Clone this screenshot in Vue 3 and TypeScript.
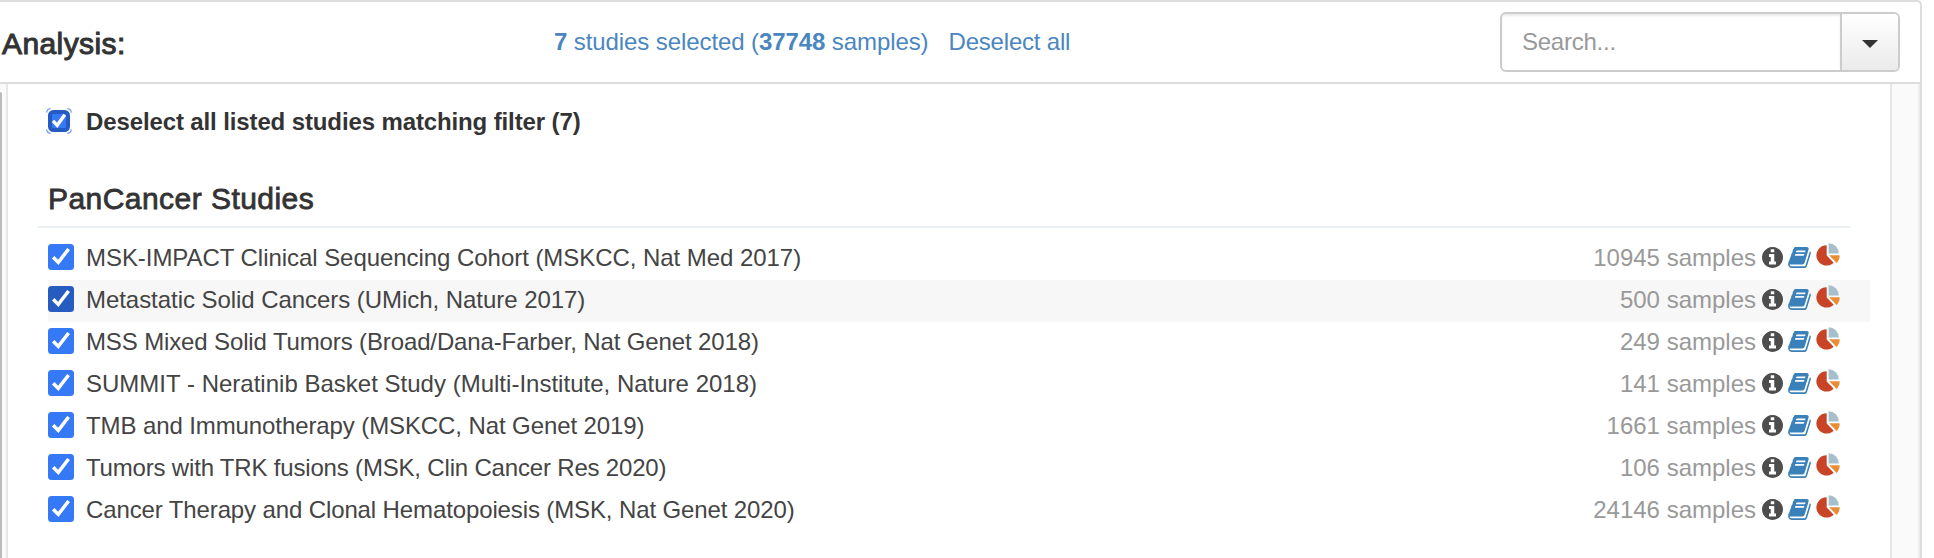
<script setup lang="ts">
interface Study {
  name: string
  samples: number
  spacing: string
  active?: boolean
}

const studies: Study[] = [
  { name: 'MSK-IMPACT Clinical Sequencing Cohort (MSKCC, Nat Med 2017)', samples: 10945, spacing: '-0.05px' },
  { name: 'Metastatic Solid Cancers (UMich, Nature 2017)', samples: 500, spacing: '-0.05px', active: true },
  { name: 'MSS Mixed Solid Tumors (Broad/Dana-Farber, Nat Genet 2018)', samples: 249, spacing: '-0.13px' },
  { name: 'SUMMIT - Neratinib Basket Study (Multi-Institute, Nature 2018)', samples: 141, spacing: '0.01px' },
  { name: 'TMB and Immunotherapy (MSKCC, Nat Genet 2019)', samples: 1661, spacing: '-0.1px' },
  { name: 'Tumors with TRK fusions (MSK, Clin Cancer Res 2020)', samples: 106, spacing: '-0.18px' },
  { name: 'Cancer Therapy and Clonal Hematopoiesis (MSK, Nat Genet 2020)', samples: 24146, spacing: '-0.12px' },
]
</script>

<template>
  <div class="page">
    <div class="frame">
      <header class="header">
        <h2 class="title">Analysis:</h2>
        <div class="summary">
          <a class="selected"><b>7</b> studies selected (<b>37748</b> samples)</a>
          <a class="deselect">Deselect all</a>
        </div>
        <div class="search">
          <input class="search-input" type="text" placeholder="Search..." />
          <button class="search-toggle" type="button" aria-label="Search options"><span class="caret"></span></button>
        </div>
      </header>
      <main class="body">
        <div class="scroll-edge"></div>
        <section class="panel">
          <label class="all">
            <svg class="all-box" viewBox="0 0 26 26">
              <path d="M.6 4.600Q1 1 4.600.6M21.400.6Q25 1 25.400 4.600M25.400 21.400Q25 25 21.400 25.400M4.600 25.400Q1 25 .6 21.400" fill="none" stroke="#6f9df0" stroke-width="1.200" />
              <rect x="2" y="2" width="22" height="22" rx="5.500" fill="#265bc6" />
              <rect x="6" y="6" width="14" height="14" rx="1" fill="#3679f6" />
              <path d="M7 12.800 11.200 17.300 18.800 6.800" fill="none" stroke="#fff" stroke-width="3.400" />
            </svg>
            <span class="all-text">Deselect all listed studies matching filter (7)</span>
          </label>
          <h3 class="group">PanCancer Studies</h3>
          <ul class="list">
            <li v-for="s in studies" :key="s.name" class="row" :class="{ active: s.active }">
              <svg class="box" viewBox="0 0 26 26">
                <rect class="box-fill" width="26" height="26" rx="3.5" />
                <path d="M5.200 13.200 10.300 18.400 20.600 5" fill="none" stroke="#fff" stroke-width="3.5" />
              </svg>
              <span class="name" :style="{ letterSpacing: s.spacing }">{{ s.name }}</span>
              <span class="count">{{ s.samples }} samples</span>
              <svg class="info" viewBox="0 0 1536 1536">
                <path fill="#4d4d4d" d="M1024 1248v-160q0-14-9-23t-23-9h-96V544q0-14-9-23t-23-9H544q-14 0-23 9t-9 23v160q0 14 9 23t23 9h96v320h-96q-14 0-23 9t-9 23v160q0 14 9 23t23 9h448q14 0 23-9t9-23zM896 352V192q0-14-9-23t-23-9H672q-14 0-23 9t-9 23v160q0 14 9 23t23 9h192q14 0 23-9t9-23zm640 416q0 209-103 385.500T1153.500 1433 768 1536t-385.500-103T103 1153.500 0 768t103-385.500T382.500 103 768 0t385.500 103T1433 382.500 1536 768z" />
              </svg>
              <svg class="book" viewBox="0 0 1664 1536">
                <path fill="#3a80b9" d="M1639 350q40 57 18 129l-275 906q-19 64-76.500 107.500T1183 1536H260q-77 0-148.500-53.500T12 1351q-24-67-2-127 0-4 3-27t4-37q1-8-3-21.500t-3-19.500q2-11 8-21t16.500-23.500T52 1051q23-38 45-91.500t30-91.500q3-10 .500-30t-.500-28q3-11 17-28t17-23q21-36 42-92t25-90q1-9-2.500-32t.5-28q4-13 22-30.500t22-22.500q19-26 42.500-84.500T340 283q1-8-3-25.500t-2-26.500q2-8 9-18t18-23 17-21q8-12 16.500-30.500t15-35 16-36 19.500-32T469.500 12t36-11.500T553 6l-1 3q38-9 51-9h761q74 0 114 56t18 130l-274 906q-36 119-71.500 153.500T1022 1280H153q-27 0-38 15-11 16-1 43 24 70 144 70h923q29 0 56-15.500t35-41.500l300-987q7-22 5-57 38 15 59 43zM575 352q-4 13 2 22.500t20 9.500h608q13 0 25.500-9.500T1247 352l21-64q4-13-2-22.500t-20-9.500H638q-13 0-25.500 9.500T596 288zm-83 256q-4 13 2 22.500t20 9.500h608q13 0 25.500-9.500T1164 608l21-64q4-13-2-22.500t-20-9.500H555q-13 0-25.500 9.500T513 544z" />
              </svg>
              <svg class="pie" viewBox="0 0 24 24">
                <path fill="#c94427" d="M10.700 2.200V12.400L17.700 19.700A10.200 10.200 0 1 1 10.700 2.200z" />
                <path fill="#a5c0cc" d="M12.600 0.200A10.400 10.400 0 0 1 22.800 10.600H12.600z" />
                <path fill="#e98d35" d="M13.200 12.300H23.700A10.200 10.200 0 0 1 20.600 20z" />
              </svg>
            </li>
          </ul>
        </section>
      </main>
    </div>
  </div>
</template>

<style>
body {
  margin: 0;
  background: #fff;
}
</style>

<style scoped>
.page {
  height: 558px;
  overflow: hidden;
  font: 24px/42px "Liberation Sans", Arial, sans-serif;
  color: #444;
}
.frame {
  box-sizing: border-box;
  width: 1922px;
  height: 558px;
  display: flex;
  flex-direction: column;
  border: 2px solid #ddd;
  border-width: 2px 2px 0 0;
  border-top-right-radius: 5px;
}
.header {
  box-sizing: border-box;
  height: 82px;
  display: flex;
  align-items: flex-start;
  border-bottom: 2px solid #ddd;
}
.title {
  margin: 21px 0 0 2px;
  width: 552px;
  font-size: 30px;
  font-weight: 400;
  letter-spacing: 0.4px;
  color: #333;
  -webkit-text-stroke: 1px #333;
  white-space: nowrap;
}
.summary {
  flex: 1;
  display: flex;
  gap: 20px;
  padding-top: 19px;
  color: #4b86c0;
  white-space: nowrap;
}
.selected {
  letter-spacing: -0.09px;
}
.deselect {
  letter-spacing: -0.2px;
}
.search {
  box-sizing: border-box;
  width: 400px;
  height: 60px;
  margin: 10px 20px 0 0;
  display: flex;
  border: 2px solid #ccc;
  border-radius: 6px;
  overflow: hidden;
}
.search-input {
  flex: 1;
  min-width: 0;
  border: 0;
  outline: 0;
  padding: 0 20px;
  font: inherit;
  letter-spacing: -0.25px;
  background: transparent;
  box-shadow: inset 0 2px 2px rgba(0, 0, 0, 0.075);
}
.search-input::placeholder {
  color: #999;
}
.search-toggle {
  box-sizing: border-box;
  width: 58px;
  padding: 4px 0 0;
  border: 0;
  border-left: 2px solid #ccc;
  background: linear-gradient(#fff, #ebebeb);
  display: flex;
  align-items: center;
  justify-content: center;
}
.caret {
  border: 8px solid transparent;
  border-top-color: #333;
  border-bottom: 0;
}
.body {
  flex: 1;
  display: flex;
  background: #fafafa;
  border-right: 2px solid #eee;
}
.scroll-edge {
  width: 2px;
  margin: 8px 4px 0 0;
  background: #bbb;
  border-top-right-radius: 2px;
}
.panel {
  box-sizing: border-box;
  width: 1886px;
  padding: 16px 20px 0 30px;
  background: #fff;
  border: 2px solid #e7e7e7;
  border-width: 0 2px;
}
.all {
  display: flex;
  height: 42px;
  padding-left: 8px;
}
.all-box {
  width: 26px;
  height: 26px;
  margin: 8px 14px 0 0;
}
.all-text {
  padding-top: 1px;
  font-weight: 700;
  letter-spacing: -0.12px;
  color: #333;
}
.group {
  box-sizing: border-box;
  width: 1812px;
  height: 86px;
  margin: 0;
  padding: 36px 0 0 10px;
  font-size: 30px;
  font-weight: 400;
  line-height: 42px;
  letter-spacing: 0.45px;
  color: #333;
  -webkit-text-stroke: 0.8px #333;
  border-bottom: 2px solid #eaf0f5;
}
.list {
  margin: 10px 0 0 10px;
  padding: 0;
  list-style: none;
}
.row {
  box-sizing: border-box;
  width: 1822px;
  height: 42px;
  padding-right: 30px;
  display: flex;
  white-space: nowrap;
}
.row.active {
  background: #f7f7f7;
}
.box {
  width: 26px;
  height: 26px;
  margin: 6px 12px 0 0;
}
.box-fill {
  fill: #3679f6;
}
.active .box-fill {
  fill: #265bc0;
}
.name,
.count {
  line-height: 40px;
}
.count {
  margin-left: auto;
  color: #999;
}
.info {
  width: 21px;
  height: 21px;
  margin: 9px 5px 0 6px;
}
.book {
  width: 23px;
  height: 21px;
  margin: 9px 5px 0 0;
}
.pie {
  width: 24px;
  height: 24px;
  margin-top: 5px;
}
</style>
